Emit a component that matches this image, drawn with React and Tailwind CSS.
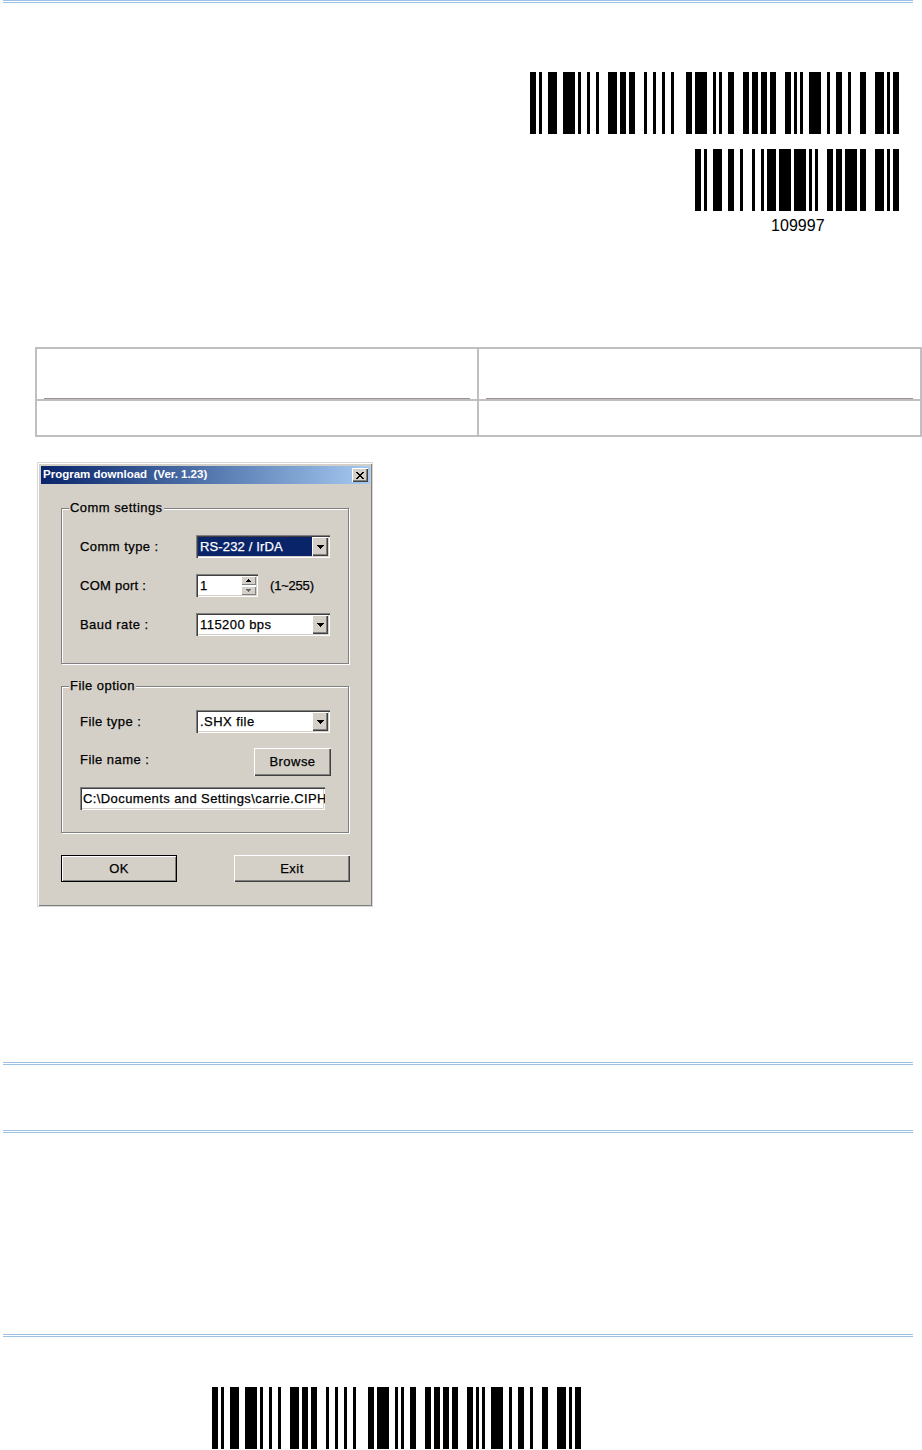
const BARS_LONG = [
  [0, 6], [9, 3], [18, 9], [33, 12], [48, 3], [57, 3], [66, 3], [78, 9], [90, 6], [99, 6], [114, 3], [123, 3],
  [132, 3], [141, 3], [156, 6], [165, 12], [183, 3], [189, 3], [198, 6], [213, 6], [222, 6], [231, 6], [240, 6],
  [255, 6], [264, 3], [270, 3], [279, 12], [297, 3], [306, 6], [318, 3], [330, 6], [345, 9], [357, 3], [363, 6],
];

const BARS_SHORT = [
  [0, 6], [9, 3], [18, 9], [33, 6], [45, 3], [57, 3], [66, 3], [72, 9], [84, 12], [99, 12], [114, 3], [120, 3],
  [132, 6], [141, 6], [150, 12], [165, 6], [180, 9], [192, 3], [198, 6],
];

function Barcode({ bars, width, className }) {
  return (
    <svg width={width} height="62" viewBox={`0 0 ${width} 62`} shapeRendering="crispEdges" className={className}>
      {bars.map(([x, w]) => (
        <rect key={x} x={x} y="0" width={w} height="62" fill="#000" />
      ))}
    </svg>
  );
}

function Rule({ className }) {
  return <div className={`ml-[3px] h-[3px] w-[910px] border-y border-[#9cc2e5] ${className || ""}`} />;
}

function Arrow() {
  return (
    <svg width="7" height="4" viewBox="0 0 7 4" shapeRendering="crispEdges">
      <path d="M0 0h7v1H0zM1 1h5v1H1zM2 2h3v1H2zM3 3h1v1H3z" fill="#000" />
    </svg>
  );
}

const raised =
  "bg-[#d4d0c8] shadow-[inset_1px_1px_#ffffff,inset_-1px_-1px_#404040,inset_-2px_-2px_#808080]";
const sunken =
  "shadow-[inset_1px_1px_#808080,inset_2px_2px_#404040,inset_-1px_-1px_#ffffff,inset_-2px_-2px_#d4d0c8]";
const spinBtn = "flex h-[9px] items-center justify-center bg-[#d4d0c8] shadow-[inset_1px_1px_#ffffff,inset_-1px_-1px_#808080]";

function Combo({ value, selected, className }) {
  return (
    <div className={`flex h-[23px] w-[134px] bg-white p-[2px] ${sunken}`}>
      <div className={`flex flex-1 items-center pl-[2px] ${selected ? "bg-[#0a246a] text-white" : ""} ${className || ""}`}>
        {value}
      </div>
      <div className={`flex w-[16px] items-center justify-center ${raised}`}>
        <Arrow />
      </div>
    </div>
  );
}

function Row({ label, children }) {
  return (
    <div className="flex h-[23px] items-center">
      <div className="w-[116px]">{label}</div>
      {children}
    </div>
  );
}

function Group({ title, className, children }) {
  return (
    <div
      className={`relative ml-[20px] w-[288px] border border-[#808080] pl-[18px] shadow-[inset_1px_1px_#ffffff,1px_1px_#ffffff] ${className}`}
    >
      <div className="absolute left-[7px] top-[-10px] bg-[#d4d0c8] px-[1px] leading-[18px]">{title}</div>
      {children}
    </div>
  );
}

function ProgramDownload() {
  return (
    <div className="ml-[38px] mt-[26px] flex h-[443px] w-[334px] flex-col bg-[#d4d0c8] pl-[3px] pr-[2px] pt-[3px] text-[13px] tracking-[0.45px] text-black [-webkit-text-stroke:0.25px_currentColor] shadow-[inset_1px_1px_#ffffff,inset_-1px_-1px_#808080,0_0_0_1px_#d8d8d8]">
      <div className="flex h-[18px] items-center justify-between bg-gradient-to-r from-[#0a246a] to-[#a6caf0] px-[2px] text-[11.5px] font-bold tracking-normal text-white [-webkit-text-stroke:0]">
        <span className="whitespace-pre">Program download  (Ver. 1.23)</span>
        <div className={`flex h-[14px] w-[16px] items-center justify-center ${raised}`}>
          <svg width="8" height="7" viewBox="0 0 8 7" shapeRendering="crispEdges">
            <path d="M0 0h2v1H0zM6 0h2v1H6zM1 1h2v1H1zM5 1h2v1H5zM2 2h4v1H2zM3 3h2v1H3zM2 4h4v1H2zM1 5h2v1H1zM5 5h2v1H5zM0 6h2v1H0zM6 6h2v1H6z" fill="#000" />
          </svg>
        </div>
      </div>

      <Group title="Comm settings" className="mt-[24px] h-[156px] pt-[26px]">
        <div className="flex flex-col gap-[16px]">
          <Row label="Comm type :">
            <Combo value="RS-232 / IrDA" selected className="tracking-[0.15px]" />
          </Row>
          <Row label={<span className="tracking-[0.25px]">COM port :</span>}>
            <div className={`flex h-[23px] w-[62px] bg-white p-[2px] ${sunken}`}>
              <div className="flex flex-1 items-center pl-[2px]">1</div>
              <div className="flex w-[15px] flex-col gap-[1px]">
                <div className={spinBtn}>
                  <svg width="5" height="3" viewBox="0 0 5 3" shapeRendering="crispEdges">
                    <path d="M2 0h1v1H2zM1 1h3v1H1zM0 2h5v1H0z" fill="#000" />
                  </svg>
                </div>
                <div className={spinBtn}>
                  <svg width="5" height="3" viewBox="0 0 5 3" shapeRendering="crispEdges">
                    <path d="M0 0h5v1H0zM1 1h3v1H1zM2 2h1v1H2z" fill="#666" />
                  </svg>
                </div>
              </div>
            </div>
            <span className="ml-[12px] tracking-[-0.2px]">(1~255)</span>
          </Row>
          <Row label="Baud rate :">
            <Combo value="115200 bps" />
          </Row>
        </div>
      </Group>

      <Group title="File option" className="mt-[22px] h-[147px] pt-[23px]">
        <Row label="File type :">
          <Combo value=".SHX file" />
        </Row>
        <div className="mt-[15px] flex h-[28px] w-[251px] items-start justify-between">
          <span className="leading-[24px]">File name :</span>
          <div className={`flex h-[28px] w-[77px] items-center justify-center ${raised}`}>Browse</div>
        </div>
        <div className={`mt-[11px] flex h-[23px] w-[245px] items-center overflow-hidden whitespace-nowrap bg-white pl-[3px] pr-[2px] tracking-[0.4px] ${sunken}`}>
          C:\Documents and Settings\carrie.CIPH
        </div>
      </Group>

      <div className="ml-[20px] mt-[22px] flex w-[289px] justify-between">
        <div className="flex h-[27px] w-[116px] items-center justify-center border border-black bg-[#d4d0c8] shadow-[inset_1px_1px_#ffffff,inset_-1px_-1px_#808080]">
          OK
        </div>
        <div className={`flex h-[27px] w-[116px] items-center justify-center ${raised}`}>Exit</div>
      </div>
    </div>
  );
}

export default function App() {
  return (
    <div className="h-[1450px] w-[922px] overflow-hidden bg-white font-['Liberation_Sans',Arial,sans-serif]">
      <Rule />
      <Barcode bars={BARS_LONG} width={369} className="ml-[530px] mt-[69px]" />
      <Barcode bars={BARS_SHORT} width={204} className="ml-[695px] mt-[15px]" />
      <div className="ml-[771px] mt-[6px] h-[18px] text-[16px] leading-[18px] tracking-[0.05px] text-black">109997</div>

      <div className="ml-[35px] mt-[112px] grid h-[90px] w-[887px] grid-cols-[440px_2px_441px] grid-rows-[50px_2px_34px] border-2 border-[#bfbfbf]">
        <div className="flex items-end px-[7px]">
          <div className="h-px w-full bg-[#a09092]" />
        </div>
        <div className="bg-[#bfbfbf]" />
        <div className="flex items-end px-[7px]">
          <div className="h-px w-full bg-[#a09092]" />
        </div>
        <div className="col-span-3 bg-[#bfbfbf]" />
        <div />
        <div className="bg-[#bfbfbf]" />
        <div />
      </div>

      <ProgramDownload />

      <Rule className="mt-[156px]" />
      <Rule className="mt-[65px]" />
      <Rule className="mt-[201px]" />
      <Barcode bars={BARS_LONG} width={369} className="ml-[212px] mt-[50px]" />
    </div>
  );
}
